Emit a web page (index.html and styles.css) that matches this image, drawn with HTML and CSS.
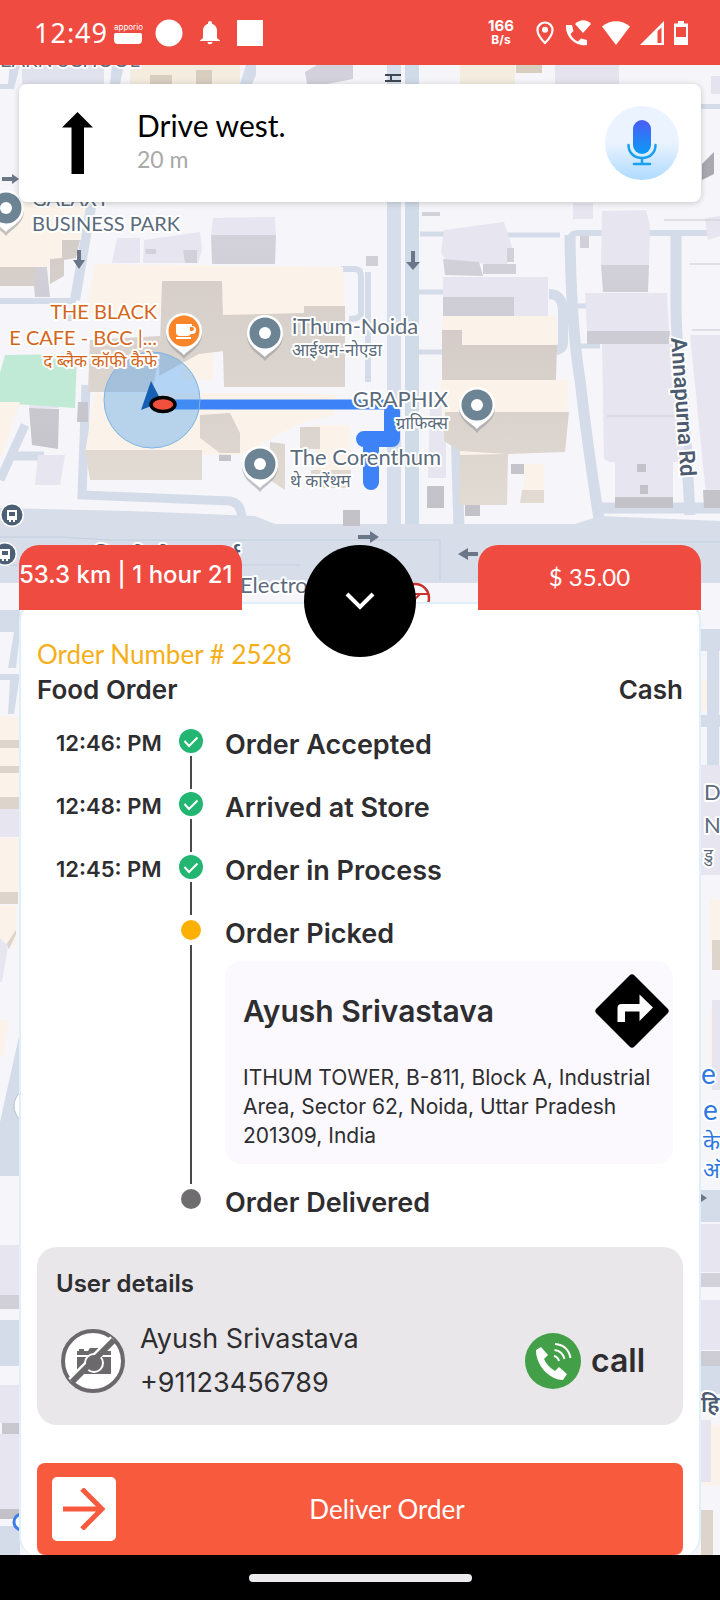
FILE: index.html
```html
<!DOCTYPE html>
<html lang="en">
<head>
    <meta charset="UTF-8">
    <meta name="viewport" content="width=device-width, initial-scale=1.0">
    <title>Order #2528</title>
    <link rel="stylesheet" href="styles.css">
</head>
<body>
    <header class="status-bar">
        <div class="status-group">
            <span class="clock">12:49</span>
            <span class="app-badge"><span>apporio</span><i></i></span>
            <svg class="icon-circle" width="28" height="28" viewBox="0 0 28 28"><circle cx="14" cy="14" r="13.5" fill="#fff"/></svg>
            <svg class="icon-bell" width="20" height="24" viewBox="0 0 20 24" fill="#fff"><path d="M10 0c1.200 0 2 .8 2 2v.8c3 .8 5 3.400 5 6.700V17l3 2.500V20H0v-.5L3 17V9.500c0-3.300 2-5.900 5-6.700V2c0-1.200.8-2 2-2zM7.500 21h5c0 1.300-1.100 2.300-2.500 2.300S7.500 22.300 7.500 21z"/></svg>
            <svg class="icon-square" width="26" height="26" viewBox="0 0 26 26"><path fill="#fff" d="M0 0h26v26H0z"/></svg>
        </div>
        <div class="status-group status-right">
            <span class="speed">166<small>B/s</small></span>
            <svg width="18" height="24" viewBox="0 0 18 24"><path d="M9 1.500c-4.100 0-7.500 3.200-7.500 7.400C1.500 14.500 9 22 9 22s7.500-7.500 7.500-13.100C16.500 4.700 13.100 1.500 9 1.500z" fill="none" stroke="#fff" stroke-width="2.200"/><circle cx="9" cy="8.800" r="3" fill="#fff"/></svg>
            <svg width="28" height="28" viewBox="0 0 28 28" fill="#fff"><path d="M2 6h6l1.500 6L6.500 15c1.500 3.500 4 6 7.500 7.500l3-3 6 1.500v5C12 28 1 18 2 6z"/><path d="M11 5c5-5 12-5 16 0l-8 9z"/></svg>
            <svg width="28" height="24" viewBox="0 0 28 24" fill="#fff"><path d="M0 5.500C8-1.500 20-1.500 28 5.500L14 24z"/></svg>
            <svg width="24" height="24" viewBox="0 0 24 24" fill="#fff"><path d="M24 0v24H0zM21.500 6.500L17.500 10v12h4z" fill-rule="evenodd"/></svg>
            <svg width="14" height="24" viewBox="0 0 14 24" fill="#fff"><path d="M4 0h6v2.500h4V24H0V2.500h4zM2 6v10h10V6z" fill-rule="evenodd"/></svg>
        </div>
    </header>

    <main class="screen">
        <svg class="map" viewBox="0 65 720 1490" preserveAspectRatio="xMidYMin slice">
            <defs>
                <linearGradient id="creamSide" x1="0" y1="0" x2="0" y2="1">
                    <stop offset="0" stop-color="#d3ccc8"/><stop offset="1" stop-color="#e2dbd3"/>
                </linearGradient>
                <linearGradient id="graySide" x1="0" y1="0" x2="0" y2="1">
                    <stop offset="0" stop-color="#d3d2da"/><stop offset="1" stop-color="#c2c1c8"/>
                </linearGradient>
                <g id="pin">
                    <path d="M0 26C-5 19-18 15-18 0a18 18 0 0 1 36 0C18 15 5 19 0 26z" fill="#8b8f98" opacity=".5" transform="translate(0 2)"/>
                    <path d="M0 24C-5 18-18 14-18 0a18 18 0 0 1 36 0C18 14 5 18 0 24z" fill="#fff"/>
                </g>
                <g id="place">
                    <use href="#pin"/><circle r="15.500" fill="#6d8494"/><circle r="6" fill="#fff"/>
                </g>
                <g id="bus">
                    <circle r="12" fill="#fff"/><circle r="10.500" fill="#4c5f74"/>
                    <path d="M-5-5h10v10h-2v2h-2V5h-2v2h-2V5h-2zM-3-3v4h6v-4z" fill="#fff" fill-rule="evenodd"/>
                </g>
            </defs>
            <path fill="#f6f5f9" d="M0 65h720v1490H0z"/>

            <!-- strip above the direction card -->
            <path fill="#e0e3ee" d="M22 65h82v19H22z"/>
            <path fill="#f4ecdf" d="M130 65h110v19H130zM460 65h55v19h-55z"/>
            <path fill="#d8cec0" d="M150 75h22v9h-22zM196 70h16v14h-16zM516 65h26v8h-26z"/>
            <path fill="#d2d1dc" d="M305 72l12-7h36v14l-26 5h-20z"/>
            <path fill="#e4e3ee" d="M555 65h64v19h-64zM711 76h9v18h-9z"/>
            <path fill="#d3dce8" d="M10 65h10l-6 24H0v-5h8zM112 65h12l-4 19h-10zM246 65h10v10l-4 9h-12zM701 104h19v5h-19z"/>
            <path fill="#a9a8b0" d="M702 164l12-12v22l-12 6z"/>

            <!-- side streets -->
            <g fill="none" stroke="#d3dce8">
                <path d="M93 195L75 300" stroke-width="10"/>
                <path d="M0 301h76M62 318h10" stroke-width="6"/>
                <path d="M341 269h14q6 0 6 8v36q0 6-12 6M368 272v110" stroke-width="6"/>
                <path d="M420 234h30M506 235h54M418 292h30M418 352h26M572 306h14M580 346h20" stroke-width="5"/>
                <path d="M549 294q14 0 14 18v30q0 8-8 8" stroke-width="10"/>
                <path d="M570 275v-34q0-8 8-8h142" stroke-width="6"/>
                <path d="M570 235q1 90 10 145 8 70 20 145" stroke-width="11"/>
                <path d="M676 235v70q0 40 8 100l6 110" stroke-width="11"/>
                <path d="M25 425L0 480M14 456h30M86 385l-4 110 148 6q12 2 12 20" stroke-width="9"/>
                <path d="M455 390l4 140M600 508h120" stroke-width="11"/>
            </g>
            <path d="M394 65v465" stroke="#d5deea" stroke-width="14"/>
            <path d="M412 65v465" stroke="#d0dbe8" stroke-width="14"/>
            <path fill="#d7dee9" d="M0 508l130 3 125 5 20 8h300l25-8 120 5v62H0z"/>
            <path fill="none" stroke="#c3cfdf" d="M0 537h60l50 3h330v40M640 542h80M0 565h300"/>

            <!-- lavender blocks -->
            <g fill="#e7e6f0">
                <path d="M117 238h23v25h-28zM144 240l56-8 2 18-4 13h-55zM213 218l62-1 1 18h-65zM444 230l60-8 9 28-6 14h-22l-40-5-4-6zM443 277h105v41H443zM602 211l44-1 4 15-1 40h-48zM585 293h82l2 38h-82zM602 344h82v118h-74l-6-3zM615 459h58v40h-58zM690 335h30v160h-14zM573 203h20v16h-20zM38 455h27l-5 30H35z"/>
                <path d="M30 395l28-1 1 14H29zM430 400h16v78h-18zM705 218l15-2v20l-12 4z"/>
            </g>
            <g fill="url(#graySide)">
                <path d="M211 235h65l-1 29h-63zM443 259l36 3 4 14-38-1zM483 264h33v10h-33zM443 297h71v22h-71zM601 265h48l-1 27h-45zM587 331h83l-1 13h-82zM615 497h58v11h-58zM703 490h17v18h-16zM30 240h14l6 57H35zM29 408l30 1-1 40-26-4zM145 249h11v5h-10zM183 250h14v13h-12zM507 248h7v14h-7zM427 486h17v22h-17zM465 504h15v12h-15zM511 464h14v10h-14zM343 510h17v16h-17z"/>
                <path d="M422 212h18v4h-18zM366 256h12v10h-12zM580 236h9v12h-9zM637 464h9v8h-9zM640 485h8v9h-8zM78 402h10v20H77zM219 448h12v13h-12z"/>
            </g>
            <path fill="none" stroke="#c9c9d4" d="M607 416h77M690 264h30M664 220h56M692 330h28"/>

            <!-- green area -->
            <path fill="#c0ead5" d="M5 355l72-1-2 54-75-5v-30z"/>

            <!-- cream blocks -->
            <g fill="#fbf3e9">
                <path d="M0 203h85l-4 37-18 2v25H0zM95 264l248 3 2 48H85zM0 402h20L2 455H0zM95 393h205l36 2-2 20-34 8-60 32-155-2zM183 330h30v50h-32z"/>
                <path d="M443 316h113l1 30H441zM440 380h128l-1 32-125 4zM460 430h48v27h-48zM524 464h20v28h-20zM315 425h35v55h-35z"/>
            </g>
            <g fill="url(#creamSide)">
                <path d="M0 267h35v19H0zM50 259l12-1v-18h18l-4 18-12 2v16l-14 8zM162 281h60l2 70-25 3-40 22zM222 315l82-2v-7h41v81H224zM90 340l70-4v16l-8 40H88zM85 450h117v30H90z"/>
                <path d="M442 330h20v15h95l-1 35H442zM445 412h124l-4 40-58 2-47-3-16-10zM460 455l48-1-1 51h-48zM522 490h22v13h-24zM200 415l30-2 10 20v20h-20l-20-15zM311 470h40v18h-40zM270 442l15 2v46l-15-10zM300 427h20v22h-20z"/>
            </g>

            <!-- strips visible beside the sheet -->
            <path fill="#d3dce8" d="M0 610h20v24l-4 34H8l6-36H0zM0 674h20l-6 40H8l2-34H0zM20 1032v144H0v-54zM701 629h19v22h-19zM707 651h12v120h-12zM701 715h19v12h-19zM701 1190h19v32h-19zM701 1366h19v28h-19zM0 1320h20v46H0zM0 1526h20v29H0z"/>
            <path fill="#fbf3e9" d="M0 716h20v28H0zM0 748h20v20H0zM0 772h20v26H0zM0 838h20v54H0zM0 905h16v40H0zM0 1020h9l-6 36H0zM701 680h6v30h-6zM710 900h10v50h-10zM710 1010h10v80h-10zM701 1425h19v60h-19z"/>
            <path fill="#ddd5cc" d="M0 740h20v8H0zM0 766h20v7H0zM0 797h20v12H0zM0 892h18v12H0zM6 945l10-15v4L9 949zM712 940h8v30h-8zM701 1510h12v45h-12z"/>
            <path fill="#e7e6f0" d="M0 809h20v28H0zM0 938l8 8-6 36H0zM0 1245h20v50H0zM0 1385h20v38H0zM0 1434h20v75H0zM701 765h19v110h-19zM712 1000h8v90h-8zM701 1224h19v48h-19zM701 1300h19v50h-19zM701 1420h10v62h-10z"/>
            <path fill="url(#graySide)" d="M0 1295h20v14H0zM2 1423h18v11H2zM0 1509h20v10H0zM701 1273h19v14h-19zM701 1351h19v15h-19z"/>
            <circle cx="32" cy="1106" r="18" fill="#fff" stroke="#b9bfc9"/>

            <!-- traffic direction arrows -->
            <g fill="#6b7789">
                <path d="M77 250h4v10h4l-6 9-6-9h4zM411 251h4v11h5l-7 8-7-8h5zM358 535h12v-4l9 6-9 6v-4h-12zM478 552h-10v-4l-10 6 10 6v-4h10zM2 177h10v-3l7 5-7 5v-3H2zM701 1194l6 4-6 4z"/>
            </g>

            <!-- route -->
            <path d="M165 404.500h221" stroke="#3d82f7" stroke-width="10"/>
            <path d="M392 412v27h-28M371 440v42" fill="none" stroke="#3d82f7" stroke-width="16" stroke-linecap="round" stroke-linejoin="round"/>
            <circle cx="152" cy="400" r="48" fill="#4a9df0" fill-opacity=".38" stroke="#7fb4e4"/>
            <path d="M151 381l14 27-11-3-13 5z" fill="#1560b4"/>
            <ellipse cx="163" cy="404.500" rx="12" ry="7" fill="#f0503c" stroke="#000" stroke-width="3.500"/>

            <!-- places -->
            <use href="#place" x="6" y="208"/>
            <use href="#place" x="265" y="333"/>
            <use href="#place" x="260" y="464"/>
            <use href="#place" x="477" y="405"/>
            <use href="#pin" x="184" y="331"/>
            <circle cx="184" cy="331" r="15.500" fill="#f9852b"/>
            <path d="M176 324h16v2a4 4 0 0 1 0 8h-1q-1 2-4 2h-7q-4 0-4-4zm14 3v4h2a2 2 0 0 0 0-4zM176 337h15v2h-15z" fill="#fff" fill-rule="evenodd"/>
            <use href="#bus" x="12" y="515"/>
            <use href="#bus" x="5" y="554"/>
            <circle cx="415" cy="598" r="14" fill="#fff" stroke="#c8322f" stroke-width="2.500"/>
            <path d="M402 594h26M412 602l8-8" stroke="#c8322f" stroke-width="2"/>
            <circle cx="22" cy="1522" r="8" fill="#fff" stroke="#3d7de8" stroke-width="3"/>
            <path d="M385 81h16M385 75h16M391 75v6" stroke="#3f4753" stroke-width="2"/>

            <g class="label">
                <text class="caps" x="0" y="67">EARN SCHOOL</text>
                <text class="caps" x="32" y="206">GALAXY</text>
                <text class="caps" x="32" y="231">BUSINESS PARK</text>
                <text x="292" y="334">iThum-Noida</text>
                <text class="hindi" x="292" y="356">आईथम-नोएडा</text>
                <text x="448" y="407" text-anchor="end">GRAPHIX</text>
                <text class="hindi" x="448" y="429" text-anchor="end">ग्राफिक्स</text>
                <text x="290" y="465">The Corenthum</text>
                <text class="hindi" x="290" y="487">थे कारेंथम</text>
                <text x="240" y="593">Electro</text>
                <text x="704" y="800">D</text>
                <text x="704" y="833">N</text>
                <text class="hindi" x="704" y="861">डु</text>
            </g>
            <g class="label label-food">
                <text class="caps" x="157" y="319" text-anchor="end">THE BLACK</text>
                <text class="caps" x="157" y="345" text-anchor="end">E CAFE - BCC |...</text>
                <text class="hindi" x="157" y="367" text-anchor="end">द ब्लैक कॉफी कैफे</text>
            </g>
            <g class="label label-blue">
                <text x="701" y="1084">e</text>
                <text x="703" y="1120">e</text>
                <text class="hindi" x="703" y="1150">के</text>
                <text class="hindi" x="703" y="1178">ऑ</text>
            </g>
            <g class="label label-road">
                <text x="240" y="564" text-anchor="end">दिल्ली नोएडा मार्ग</text>
                <text x="701" y="1412">हि</text>
                <text transform="translate(671 338) rotate(86)">Annapurna Rd</text>
            </g>
        </svg>

        <div class="overlay">
            <section class="direction-card">
                <svg class="arrow-up" width="32" height="62" viewBox="0 0 32 62"><path d="M15.500 0L31 15.500h-9V62H9.500V15.500H0z"/></svg>
                <div class="direction-text">
                    <h1>Drive west.</h1>
                    <p>20 m</p>
                </div>
                <button class="mic-button" aria-label="Voice guidance">
                    <svg width="30" height="46" viewBox="0 0 30 46">
                        <defs>
                            <linearGradient id="mic" x1="0" y1="0" x2="0" y2="1">
                                <stop offset="0" stop-color="#4b5cf6"/><stop offset="1" stop-color="#0a9bf5"/>
                            </linearGradient>
                        </defs>
                        <rect x="6" y="0" width="18" height="34" rx="9" fill="url(#mic)"/>
                        <path d="M1.500 25c0 8 6 13 13.500 13s13.500-5 13.500-13M15 38v5M7 44h16" fill="none" stroke="#1aa0ee" stroke-width="2.500" stroke-linecap="round"/>
                    </svg>
                </button>
            </section>

            <section class="order">
                <div class="order-tabs">
                    <div class="tab tab-distance">53.3 km | 1 hour 21</div>
                    <button class="collapse-button" aria-label="Collapse">
                        <svg width="32" height="20" viewBox="0 0 32 20"><path d="M3 3l13 13L29 3" fill="none" stroke="#fff" stroke-width="4"/></svg>
                    </button>
                    <div class="tab tab-price">$ 35.00</div>
                </div>

                <div class="sheet">
                    <p class="order-number">Order Number # 2528</p>
                    <div class="order-type">
                        <span>Food Order</span>
                        <span>Cash</span>
                    </div>

                    <ol class="timeline">
                        <li class="step done">
                            <time>12:46: PM</time>
                            <span class="marker"><svg width="24" height="24" viewBox="0 0 24 24"><circle cx="12" cy="12" r="12" fill="#23b673"/><path d="M5.500 12l4.500 5 8.500-8.500" fill="none" stroke="#fff" stroke-width="2"/></svg></span>
                            <h2>Order Accepted</h2>
                        </li>
                        <li class="step done">
                            <time>12:48: PM</time>
                            <span class="marker"><svg width="24" height="24" viewBox="0 0 24 24"><circle cx="12" cy="12" r="12" fill="#23b673"/><path d="M5.500 12l4.500 5 8.500-8.500" fill="none" stroke="#fff" stroke-width="2"/></svg></span>
                            <h2>Arrived at Store</h2>
                        </li>
                        <li class="step done">
                            <time>12:45: PM</time>
                            <span class="marker"><svg width="24" height="24" viewBox="0 0 24 24"><circle cx="12" cy="12" r="12" fill="#23b673"/><path d="M5.500 12l4.500 5 8.500-8.500" fill="none" stroke="#fff" stroke-width="2"/></svg></span>
                            <h2>Order in Process</h2>
                        </li>
                        <li class="step current">
                            <span class="marker"><svg width="24" height="24" viewBox="0 0 24 24"><circle cx="12" cy="12" r="10" fill="#fdb004"/></svg></span>
                            <div class="step-body">
                                <h2>Order Picked</h2>
                                <div class="drop-card">
                                    <div class="drop-head">
                                        <h3>Ayush Srivastava</h3>
                                        <button class="navigate-button" aria-label="Navigate">
                                            <svg width="74" height="74" viewBox="0 0 74 74"><path d="M34.500 1.500q2.500-2.500 5 0l33 33q2.500 2.500 0 5l-33 33q-2.500 2.500-5 0l-33-33q-2.500-2.500 0-5z"/><path d="M22.500 48V34q0-4 4-4h18v-9.500L58 33.500 44.500 47v-9.500H30V48z" fill="#fff"/></svg>
                                        </button>
                                    </div>
                                    <p>ITHUM TOWER, B-811, Block A, Industrial<br>Area, Sector 62, Noida, Uttar Pradesh<br>201309, India</p>
                                </div>
                            </div>
                        </li>
                        <li class="step pending">
                            <span class="marker"><svg width="24" height="24" viewBox="0 0 24 24"><circle cx="12" cy="12" r="10" fill="#6f6d6f"/></svg></span>
                            <h2>Order Delivered</h2>
                        </li>
                    </ol>

                    <section class="user-card">
                        <h2>User details</h2>
                        <div class="user-row">
                            <svg class="avatar" width="64" height="64" viewBox="0 0 64 64">
                                <circle cx="32" cy="32" r="30" fill="#fff" stroke="#6b696b" stroke-width="4"/>
                                <path d="M16 45V28h34v17zM16 26v-4h2v-2h5v2h4l2-3h12l2 3h7v4z" fill="#6b696b"/>
                                <path d="M9 51L51 9" stroke="#fff" stroke-width="5"/>
                                <circle cx="33" cy="34" r="9" fill="#6b696b" stroke="#fff" stroke-width="2"/>
                                <path d="M11 53L53 11" stroke="#6b696b" stroke-width="6"/>
                            </svg>
                            <div class="user-info">
                                <span>Ayush Srivastava</span>
                                <span>+91123456789</span>
                            </div>
                            <button class="call-button">
                                <svg width="56" height="56" viewBox="0 0 56 56">
                                    <circle cx="28" cy="28" r="28" fill="#44a048"/>
                                    <path d="M11 17l5-3 7 8-4 4c2 5 6 9 11 12l4-4 8 7-4 6C26 47 11 34 11 17z" fill="#fff"/>
                                    <path d="M29 23q4 1 5 5M29.500 17q8 1 10 9M30 11q13 1 15.500 14" fill="none" stroke="#fff" stroke-width="2"/>
                                </svg>
                                call
                            </button>
                        </div>
                    </section>

                    <button class="deliver-button">
                        <span class="deliver-icon"><svg width="42" height="42" viewBox="0 0 42 42"><path d="M0 21h38M19 1l20 20-20 20" fill="none" stroke="#f85a3e" stroke-width="5"/></svg></span>
                        <span class="deliver-text">Deliver Order</span>
                    </button>
                </div>
            </section>
        </div>
    </main>

    <footer class="nav-bar"><span class="nav-pill"></span></footer>
</body>
</html>
```

FILE: styles.css
```css
* {
    margin: 0;
    padding: 0;
    box-sizing: border-box;
}

body {
    font-family: Inter, 'Noto Sans', sans-serif;
    min-height: 100vh;
    display: flex;
    flex-direction: column;
    color: #2e2d30;
    background: #f6f5f9;
}

button {
    font: inherit;
    color: inherit;
    background: none;
    border: none;
    cursor: pointer;
}

svg {
    display: block;
    flex-shrink: 0;
}

/* status bar */
.status-bar {
    height: 65px;
    padding: 0 32px 0 34px;
    background: #f04b41;
    color: #fff;
    display: flex;
    justify-content: space-between;
    align-items: center;
}

.status-group {
    display: flex;
    align-items: center;
}

.clock {
    font-family: 'Noto Sans', sans-serif;
    font-size: 27px;
    letter-spacing: 1px;
    margin-right: 6px;
}

.app-badge {
    width: 28px;
    font-size: 8px;
    line-height: 11px;
    text-align: center;
}

.app-badge i {
    display: block;
    height: 11px;
    border-radius: 2px 2px 4px 4px;
    background: #fff;
}

.icon-circle {
    margin-left: 13px;
}

.icon-bell,
.icon-square {
    margin-left: 17px;
}

.status-right {
    gap: 10px;
}

.speed {
    font-size: 15px;
    font-weight: 700;
    line-height: 15px;
    text-align: center;
    margin-right: 12px;
}

.speed small {
    display: block;
    font-size: 12px;
    line-height: 14px;
}

/* map and overlay share one grid cell */
.screen {
    flex: 1;
    display: grid;
    overflow: hidden;
}

.map,
.overlay {
    grid-area: 1 / 1;
}

.map {
    width: 100%;
    height: 100%;
    min-height: 0;
    contain: size;
}

.label {
    font-family: Lato, 'Noto Sans', sans-serif;
    font-size: 22px;
    fill: #5b6b7b;
    stroke: #fff;
    stroke-width: 4px;
    stroke-linejoin: round;
    paint-order: stroke;
}

.caps {
    font-size: 20px;
}

.hindi {
    font-size: 17px;
}

.label-food {
    fill: #d4661c;
}

.label-blue {
    font-size: 28px;
    fill: #2f78e0;
}

.label-blue .hindi {
    font-size: 22px;
}

.label-road {
    font-family: Roboto, 'Noto Sans', sans-serif;
    font-weight: 600;
    fill: #4d5b70;
}

.overlay {
    padding: 19px 19px 0;
    display: flex;
    flex-direction: column;
    justify-content: space-between;
    z-index: 1;
}

.direction-card {
    height: 118px;
    padding: 0 22px 0 43px;
    background: #fff;
    border-radius: 8px;
    box-shadow: 0 1px 6px rgba(0, 0, 0, 0.2);
    display: flex;
    align-items: center;
}

.direction-text {
    flex: 1;
    margin-left: 43px;
    padding-bottom: 4px;
    font-family: Lato, sans-serif;
}

.direction-text h1 {
    font-size: 30px;
    line-height: 36px;
    font-weight: 400;
    color: #000;
}

.direction-text p {
    font-size: 23px;
    line-height: 32px;
    color: #a9a9a9;
}

.mic-button {
    width: 74px;
    height: 74px;
    border-radius: 50%;
    background: linear-gradient(#eaf3ff 50%, #aedaff);
    display: flex;
    align-items: center;
    justify-content: center;
}

/* order panel */
.order-tabs {
    position: relative;
    z-index: 1;
    display: flex;
    justify-content: space-between;
    align-items: flex-start;
    height: 57px;
}

.tab {
    width: 223px;
    height: 65px;
    line-height: 60px;
    background: #f04b41;
    color: #fff;
    border-radius: 20px 20px 0 0;
    font-size: 24px;
    text-align: center;
}

.tab-distance {
    font-weight: 500;
    text-align: left;
    white-space: nowrap;
}

.tab-price {
    font-family: Lato, sans-serif;
    line-height: 64px;
}

.collapse-button {
    width: 112px;
    height: 112px;
    border-radius: 50%;
    background: #000;
    display: flex;
    align-items: center;
    justify-content: center;
}

.sheet {
    padding: 33px 16px 0;
    background: #fff;
    border: 2px solid #def0fa;
    border-bottom: none;
    border-radius: 18px;
}

.order-number {
    font-family: Lato, sans-serif;
    font-size: 26px;
    line-height: 34px;
    color: #f6ae17;
}

.order-type {
    display: flex;
    justify-content: space-between;
    font-size: 26px;
    line-height: 38px;
    font-weight: 600;
}

.timeline {
    list-style: none;
    margin-top: 20px;
    padding: 0 10px 0 19px;
}

.step {
    display: grid;
    grid-template-columns: 108px 24px 1fr;
    column-gap: 15px;
    min-height: 63px;
}

.step time {
    font-size: 22px;
    line-height: 28px;
    font-weight: 600;
    white-space: nowrap;
}

.step h2 {
    font-size: 27px;
    line-height: 32px;
    font-weight: 600;
}

.step > h2,
.step-body {
    margin-left: 7px;
}

.marker {
    grid-column: 2;
    display: flex;
    flex-direction: column;
    align-items: center;
}

.marker::after {
    content: '';
    flex: 1;
    width: 2px;
    margin: 3px 0;
    background: #4a484a;
}

.pending .marker::after {
    display: none;
}

.pending {
    min-height: 60px;
}

.drop-card {
    margin: 11px 0 23px;
    padding: 13px 4px 12px 18px;
    min-height: 203px;
    background: #fbf9fd;
    border-radius: 16px;
}

.drop-head {
    display: flex;
    justify-content: space-between;
    align-items: center;
}

.drop-head h3 {
    font-size: 30px;
    line-height: 36px;
    font-weight: 600;
}

.drop-card p {
    margin-top: 15px;
    font-size: 21px;
    line-height: 29px;
    white-space: nowrap;
}

.user-card {
    padding: 20px 38px 20px 19px;
    height: 178px;
    background: #e9e7ea;
    border-radius: 20px;
}

.user-card h2 {
    font-size: 24px;
    line-height: 34px;
    font-weight: 600;
}

.user-row {
    margin-top: 16px;
    padding-left: 5px;
    display: flex;
    align-items: center;
}

.user-info {
    flex: 1;
    margin-left: 15px;
    display: flex;
    flex-direction: column;
    font-size: 27px;
    line-height: 44px;
}

.call-button {
    display: flex;
    align-items: center;
    gap: 10px;
    font-size: 32px;
    line-height: 36px;
    font-weight: 600;
}

.deliver-button {
    width: 100%;
    height: 92px;
    margin-top: 38px;
    padding: 0 25px 0 15px;
    background: #f85a3e;
    color: #fff;
    border-radius: 8px;
    display: flex;
    align-items: center;
}

.deliver-icon {
    width: 64px;
    height: 64px;
    background: #fff;
    border-radius: 5px;
    display: flex;
    align-items: center;
    justify-content: center;
}

.deliver-text {
    flex: 1;
    font-family: Lato, sans-serif;
    font-size: 26px;
    line-height: 32px;
}

/* system navigation */
.nav-bar {
    height: 45px;
    background: #000;
    display: flex;
    align-items: center;
    justify-content: center;
}

.nav-pill {
    width: 223px;
    height: 8px;
    border-radius: 4px;
    background: #eeebee;
}
```
